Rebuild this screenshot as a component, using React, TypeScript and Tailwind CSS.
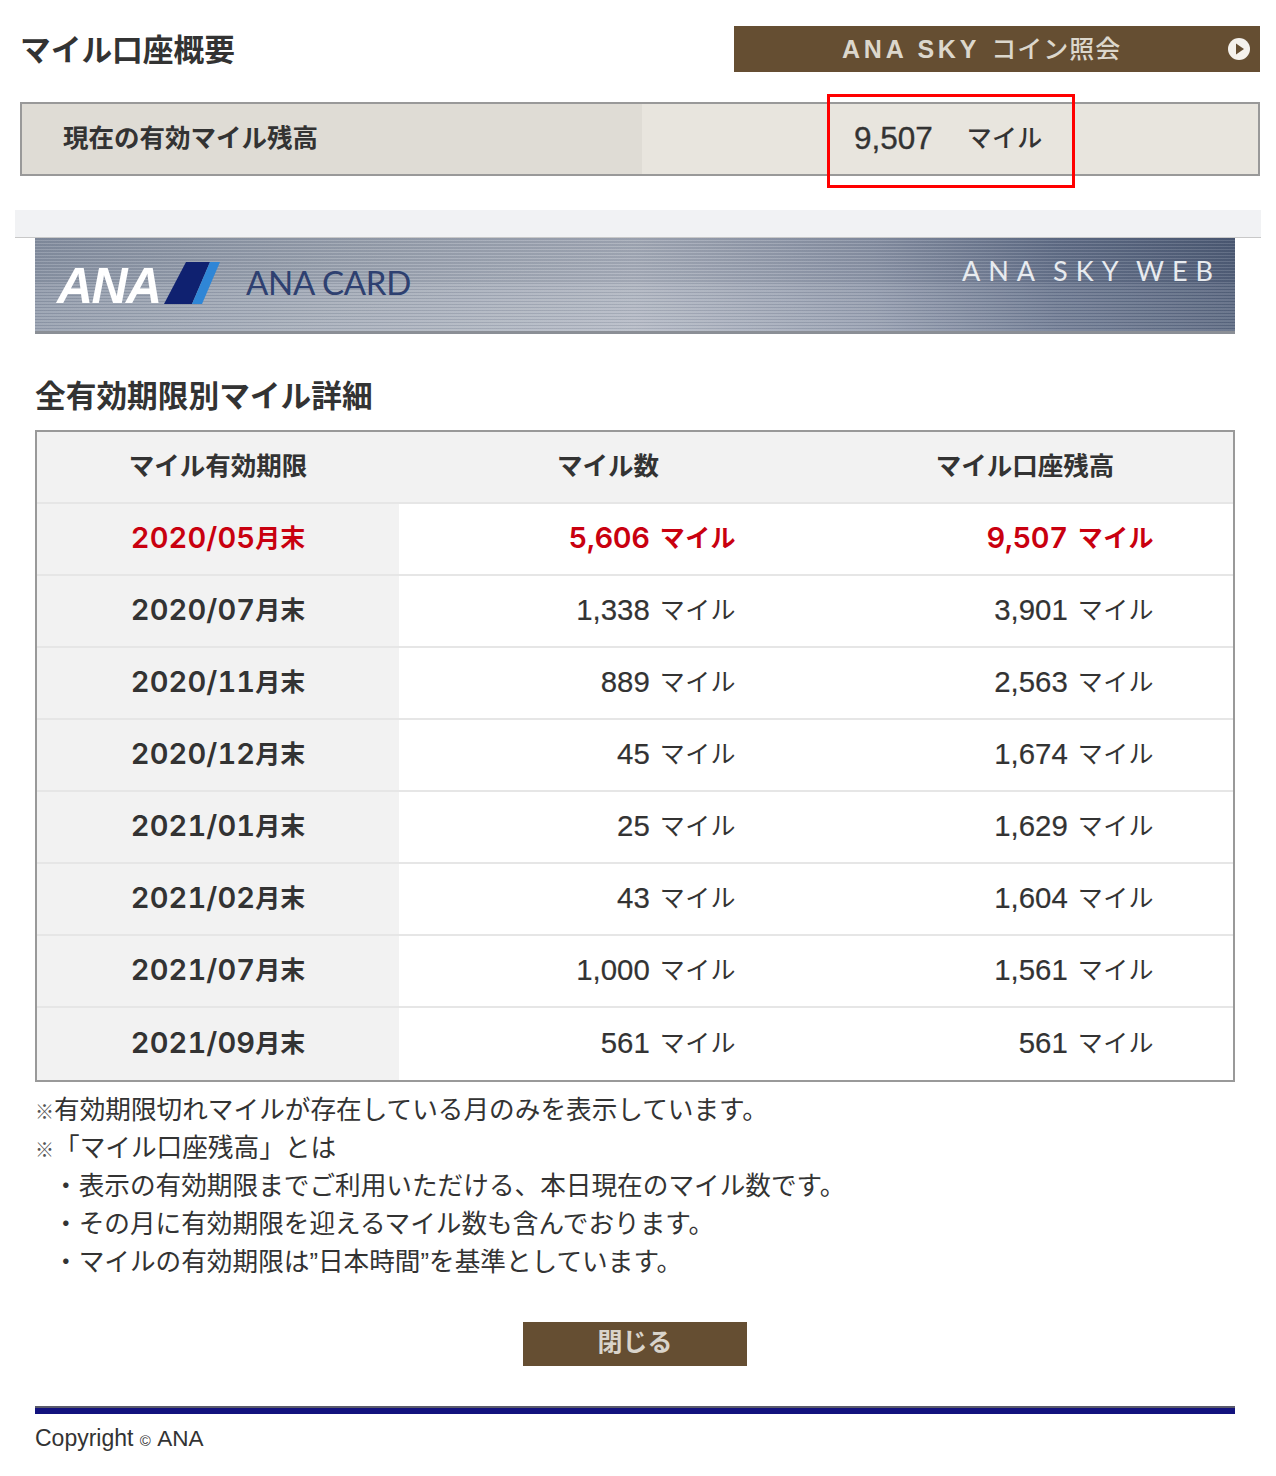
import React from "react";

const jp = "font-['Liberation_Sans','Noto_Sans_CJK_JP',sans-serif]";

const rows = [
  ["2020/05", "5,606", "9,507", true],
  ["2020/07", "1,338", "3,901"],
  ["2020/11", "889", "2,563"],
  ["2020/12", "45", "1,674"],
  ["2021/01", "25", "1,629"],
  ["2021/02", "43", "1,604"],
  ["2021/07", "1,000", "1,561"],
  ["2021/09", "561", "561"],
] as [string, string, string, boolean?][];

const notes = [
  "・表示の有効期限までご利用いただける、本日現在のマイル数です。",
  "・その月に有効期限を迎えるマイル数も含んでおります。",
  "・マイルの有効期限は”日本時間”を基準としています。",
];

function Miles({ n, hot }: { n: string; hot?: boolean }) {
  return (
    <span className={hot ? "flex items-center justify-end font-bold" : "flex items-center justify-end"}>
      <span className={hot ? "mb-[2px] font-['Inter',sans-serif] text-[29px] font-semibold tabular-nums tracking-[-0.3px]" : "mb-[2px] text-[29.4px] [-webkit-text-stroke:0.2px]"}>{n}</span>
      <span className="ml-[10px] text-[25px] tracking-[0.4px]">マイル</span>
    </span>
  );
}

function Mark() {
  return <span className="inline-block w-[19px] text-[19px] leading-none text-[#555]">※</span>;
}

export default function App() {
  return (
    <div className={`relative h-[1476px] w-[1276px] overflow-hidden bg-white text-[#333] ${jp}`}>
      {/* Header */}
      <div className="ml-[20px] mt-[26px] flex h-[46px] w-[1240px] items-center justify-between">
        <h1 className="pt-[4px] text-[30.7px] font-bold leading-none">マイル口座概要</h1>
        <div className="flex h-[46px] w-[526px] items-center bg-[#654e32] pr-[10px]">
          <span className="ml-[108px] flex flex-1 items-center pt-[1px] text-[25px] font-bold text-[#dcd7cc]">
            <span className="tracking-[3.8px]">ANA SKY</span>
            <span className="ml-[11px] font-medium tracking-[1px]">コイン照会</span>
          </span>
          <svg width="22" height="22" viewBox="0 0 22 22">
            <circle cx="11" cy="11" r="11" fill="#f4f1ec" />
            <path d="M8 5.5 L16 11 L8 16.5 Z" fill="#654e32" />
          </svg>
        </div>
      </div>

      {/* Balance */}
      <div className="relative ml-[20px] mt-[30px] flex h-[74px] w-[1240px] border-2 border-[#999] bg-[#e8e5de]">
        <div className="flex w-[620px] items-center bg-[#dfdcd5] pb-[2px] pl-[41px] text-[25.5px] font-bold">現在の有効マイル残高</div>
        <div className="ml-[212px] flex items-center">
          <span className="text-[31.5px] [-webkit-text-stroke:0.35px]">9,507</span>
          <span className="ml-[34px] text-[25px] font-medium tracking-[0.2px]">マイル</span>
        </div>
        <div className="absolute left-[805px] top-[-10px] h-[94px] w-[248px] border-[3px] border-[#f00]" />
      </div>

      {/* Band */}
      <div className="ml-[15px] mt-[34px] h-[28px] w-[1246px] border-b border-[#c8c8c8] bg-[#f1f2f4]" />

      <div className="ml-[35px] w-[1200px]">
        {/* Banner */}
        <div className="relative h-[96px] overflow-hidden border-b-[3px] border-[#8b8f96] bg-[linear-gradient(90deg,#8c96a7_0%,#a0a8b5_25%,#aeb4c0_50%,#8e97aa_70%,#63708a_85%,#4c5a75_100%)]">
          <div className="absolute inset-0 bg-[linear-gradient(180deg,rgba(40,50,70,0.08)_0%,rgba(255,255,255,0.08)_100%)]" />
          <div className="absolute inset-0 bg-[repeating-linear-gradient(0deg,rgba(255,255,255,0.13)_0px,rgba(255,255,255,0.13)_1.5px,rgba(60,70,90,0.1)_1.5px,rgba(60,70,90,0.1)_3px)]" />
          <div className="relative flex h-full items-start">
            <span className="ml-[22px] mt-[21px] w-[105px] font-['Liberation_Sans',sans-serif] text-[50px] font-bold italic leading-[54px] tracking-[-1.6px] text-white">ANA</span>
            <svg className="ml-[2px] mt-[24px]" width="56" height="42" viewBox="0 0 56 42">
              <path d="M22 0 H46 L28 42 H0 Z" fill="#0f2170" />
              <path d="M46 0 H56 L38 42 H28 Z" fill="#2f86d6" />
            </svg>
            <span className="ml-[26px] mt-[26px] font-['Lato',sans-serif] text-[33px] leading-[36px] tracking-[-0.3px] text-[#2e4070]">ANA CARD</span>
            <span className="ml-auto mr-[14px] mt-[17px] font-['Lato',sans-serif] text-[27px] leading-[32px] tracking-[8px] [word-spacing:-4px] text-[#e8ebef]">ANA SKY WEB</span>
          </div>
        </div>

        {/* Heading */}
        <h2 className="mt-[43px] text-[30.7px] font-bold leading-[40px]">全有効期限別マイル詳細</h2>

        {/* Table */}
        <div className="mt-[13px] h-[652px] border-2 border-[#999]">
          <div className="grid h-[72px] grid-cols-[362px_418px_1fr] items-center border-b-2 border-[#e6e6e6] bg-[#f2f2f2] pb-[2px] text-center text-[25.5px] font-bold">
            <span>マイル有効期限</span>
            <span>マイル数</span>
            <span>マイル口座残高</span>
          </div>
          {rows.map(([date, n, total, hot], i) => (
            <div
              key={date}
              className={
                i === rows.length - 1
                  ? "grid h-[72px] grid-cols-[362px_418px_1fr]"
                  : "grid h-[72px] grid-cols-[362px_418px_1fr] border-b-2 border-[#e6e6e6]"
              }
            >
              <div className={hot ? "flex items-center justify-center bg-[#f2f2f2] font-bold text-[#c9000f]" : "flex items-center justify-center bg-[#f2f2f2] font-bold"}>
                <span className="mb-[2px] font-['Inter',sans-serif] text-[29px] font-semibold tabular-nums tracking-[0.1px]">{date}</span>
                <span className="text-[25px]">月末</span>
              </div>
              <div className={hot ? "flex items-center justify-end pr-[81px] text-[#c9000f]" : "flex items-center justify-end pr-[81px]"}>
                <Miles n={n} hot={hot} />
              </div>
              <div className={hot ? "flex items-center justify-end pr-[79px] text-[#c9000f]" : "flex items-center justify-end pr-[79px]"}>
                <Miles n={total} hot={hot} />
              </div>
            </div>
          ))}
        </div>

        {/* Notes */}
        <div className="mt-[9px] text-[25.65px] leading-[38px]">
          <p><Mark />有効期限切れマイルが存在している月のみを表示しています。</p>
          <p><Mark />「マイル口座残高」とは</p>
          {notes.map((t) => (
            <p key={t} className="pl-[18px]">{t}</p>
          ))}
        </div>

        {/* Close */}
        <div className="mt-[41px] flex justify-center">
          <div className="flex h-[44px] w-[224px] items-center justify-center bg-[#654e32] pb-[2px] text-[25px] font-bold text-[#d9d4cb]">閉じる</div>
        </div>

        {/* Footer */}
        <div className="mt-[40px] h-[8px] border-t-2 border-[#5a5a6a] bg-[#12127e]" />
        <p className="mt-[9px] text-[23px] leading-[30px]">
          Copyright <span className="text-[15px]">©</span> <span className="text-[22.5px]">ANA</span>
        </p>
      </div>
    </div>
  );
}
